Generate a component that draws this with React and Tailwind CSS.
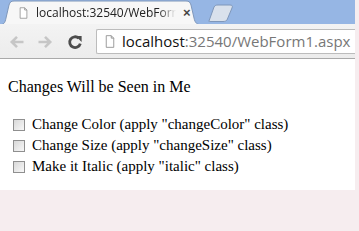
import React from "react";

function PageIcon({ className = "" }) {
  return (
    <svg viewBox="0 0 12 15" className={className}>
      <path d="M1.5 0.5h6l3 3v11h-9z" fill="#fff" stroke="#8a8a8a" />
      <path d="M7.5 0.5v3h3" fill="none" stroke="#8a8a8a" />
    </svg>
  );
}

function Tabs() {
  return (
    <div className="relative h-[25px] bg-[rgb(150,182,228)]">
      <svg className="absolute left-0 top-0 w-[240px] h-[25px]" viewBox="0 0 240 25">
        <path d="M-2 25 C4 25 5 23 6 18 L9 5 C10 2 11 1 14 1 H186 C189 1 190 2 191 5 L194 18 C195 23 197 25 203 25 Z" fill="#f7f7f7" stroke="#7f97ba" strokeWidth="1" />
        <path d="M209 21 L214 7 C215 5.5 216 5 218 5 H230 C232 5 233 6 232 8 L227 20 C226 21 225 21.5 223 21.5 H211 C209 21.5 208.5 21.5 209 21 Z" fill="#d9e1ec" stroke="#7f97ba" strokeWidth="1" />
      </svg>
      <div className="relative flex items-center h-[25px] pl-[19px]">
        <PageIcon className="w-[9px] h-[12px] shrink-0" />
        <span className="ml-[8px] w-[140px] text-[12px] leading-none text-[#222] whitespace-nowrap [font-family:'Open_Sans','Liberation_Sans',sans-serif] [mask-image:linear-gradient(to_right,black_88%,transparent)]">
          localhost:32540/WebForm
        </span>
        <span className="ml-[7px] text-[13px] font-bold leading-none text-[#444] [font-family:'Liberation_Sans',sans-serif]">×</span>
      </div>
      <div className="absolute left-0 right-0 bottom-0 h-[1px] bg-[#f3f3f3]" />
    </div>
  );
}

function Toolbar() {
  return (
    <div className="flex items-center h-[34px] bg-gradient-to-b from-[#f3f3f3] to-[#ececec] border-b border-[#a9a9a9] pl-[9px]">
      <svg viewBox="0 0 16 16" className="w-[16px] h-[16px] shrink-0">
        <path d="M14.5 8H3M8 2.8L2.8 8 8 13.2" fill="none" stroke="#c6c6c6" strokeWidth="2.6" />
      </svg>
      <svg viewBox="0 0 16 16" className="w-[16px] h-[16px] ml-[12px] shrink-0">
        <path d="M1.5 8H13M8 2.8L13.2 8 8 13.2" fill="none" stroke="#c6c6c6" strokeWidth="2.6" />
      </svg>
      <svg viewBox="0 0 16 16" className="w-[16px] h-[16px] ml-[14px] shrink-0">
        <path d="M13.3 9.6A5.4 5.4 0 1 1 11.8 4.2" fill="none" stroke="#4c4c4c" strokeWidth="2.8" />
        <path d="M8.6 2h6v6z" fill="#4c4c4c" />
      </svg>
      <div className="ml-[13px] flex items-center h-[25px] flex-1 min-w-0 bg-white border border-[#bcbcbc] border-r-0 rounded-l-[2px] pl-[8px] overflow-hidden">
        <PageIcon className="w-[10px] h-[13px] shrink-0" />
        <span className="ml-[7px] text-[15px] leading-none whitespace-nowrap text-[#777] [font-family:'Open_Sans','Liberation_Sans',sans-serif]">
          <span className="text-[#111]">localhost</span>:32540/WebForm1.aspx
        </span>
      </div>
    </div>
  );
}

export default function App() {
  const items = [
    'Change Color (apply "changeColor" class)',
    'Change Size (apply "changeSize" class)',
    'Make it Italic (apply "italic" class)',
  ];
  return (
    <div className="w-[359px] h-[231px] bg-[#f6edef] overflow-hidden">
      <div className="w-[355px] bg-white">
        <Tabs />
        <Toolbar />
        <div className="h-[131px] pt-[18px] pl-[8px] text-black [font-family:'Liberation_Serif',serif]">
          <p className="text-[16px] leading-[19px]">Changes Will be Seen in Me</p>
          <div className="mt-[18px] flex flex-col">
            {items.map((t) => (
              <label key={t} className="flex items-center h-[21px]">
                <span className="ml-[5px] w-[12px] h-[12px] shrink-0 border border-[#8f8f8f] bg-gradient-to-br from-[#d8d8d8] to-[#f8f8f8]" />
                <span className="ml-[7px] text-[15px] leading-none">{t}</span>
              </label>
            ))}
          </div>
        </div>
      </div>
    </div>
  );
}
